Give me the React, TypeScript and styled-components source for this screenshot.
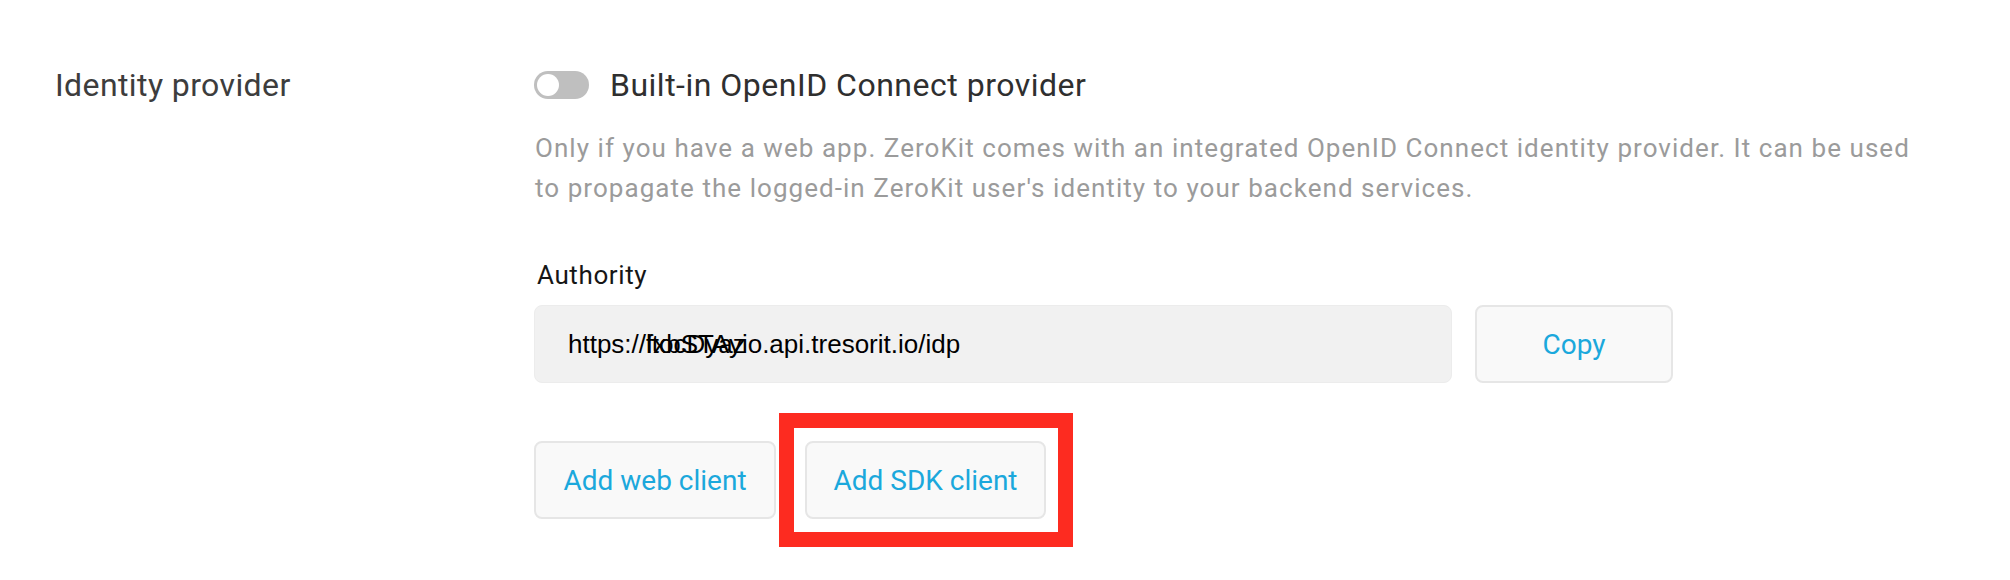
import styled, { createGlobalStyle } from "styled-components";

const GlobalStyle = createGlobalStyle`
  html, body {
    margin: 0;
    padding: 0;
    background: #ffffff;
  }

  body {
    font-family: Roboto, "Noto Sans", sans-serif;
  }
`;

const Page = styled.div`
  width: 2010px;
  height: 580px;
  box-sizing: border-box;
  padding: 65px 0 0 55px;
  display: grid;
  grid-template-columns: 479px 1420px;
  align-items: start;
`;

const SectionLabel = styled.div`
  font-size: 32px;
  line-height: 40px;
  letter-spacing: 0.4px;
  color: #3d3d3d;
`;

const Content = styled.div`
  display: flex;
  flex-direction: column;
`;

const ToggleRow = styled.div`
  display: flex;
  align-items: center;
  gap: 21px;
  height: 40px;
`;

const Toggle = styled.div<{ on?: boolean }>`
  width: 55px;
  height: 28px;
  border-radius: 14px;
  background: ${(p) => (p.on ? "#1ba8dc" : "#bfbfbf")};
  display: flex;
  align-items: center;
  justify-content: ${(p) => (p.on ? "flex-end" : "flex-start")};
  padding: 0 3px;
  box-sizing: border-box;
  flex-shrink: 0;

  &::before {
    content: "";
    width: 22px;
    height: 22px;
    border-radius: 50%;
    background: #ffffff;
  }
`;

const ToggleTitle = styled.div`
  font-size: 32px;
  line-height: 40px;
  letter-spacing: 0.5px;
  color: #2f2f2f;
`;

const Description = styled.p`
  margin: 23px 0 0 1px;
  font-size: 26px;
  line-height: 40px;
  letter-spacing: 1.05px;
  color: #9b9b9b;
  max-width: 1395px;
`;

const FieldLabel = styled.div`
  margin: 51px 0 0 3px;
  font-size: 26px;
  line-height: 32px;
  letter-spacing: 0.6px;
  color: #161616;
`;

const FieldRow = styled.div`
  margin-top: 14px;
  display: flex;
  gap: 23px;
`;

const ReadonlyInput = styled.div`
  width: 918px;
  height: 78px;
  box-sizing: border-box;
  padding: 0 33px;
  display: flex;
  align-items: center;
  background: #f1f1f1;
  border: 1px solid #ececec;
  border-radius: 8px;
  font-family: "Liberation Sans", Arial, sans-serif;
  font-size: 26px;
  color: #000000;
  white-space: nowrap;
`;

const Garbled = styled.span`
  display: inline-grid;

  & > span {
    grid-area: 1 / 1;
  }
`;

const Button = styled.button<{ w: number }>`
  width: ${(p) => p.w}px;
  height: 78px;
  padding: 0;
  box-sizing: border-box;
  background: #f9f9f9;
  border: 2px solid #e6e6e6;
  border-radius: 8px;
  font-family: Roboto, "Noto Sans", sans-serif;
  font-size: 28px;
  color: #1ba8dc;
  cursor: pointer;
`;

const ActionRow = styled.div`
  margin-top: 58px;
  display: flex;
  gap: 29px;
`;

const Highlight = styled.div`
  position: relative;
  display: flex;

  &::after {
    content: "";
    position: absolute;
    top: -28px;
    bottom: -28px;
    left: -26px;
    right: -27px;
    border: 15px solid #fd2b20;
    pointer-events: none;
  }
`;

export default function App() {
  return (
    <>
      <GlobalStyle />
      <Page>
        <SectionLabel>Identity provider</SectionLabel>
        <Content>
          <ToggleRow>
            <Toggle />
            <ToggleTitle>Built-in OpenID Connect provider</ToggleTitle>
          </ToggleRow>
          <Description>
            Only if you have a web app. ZeroKit comes with an integrated OpenID
            Connect identity provider. It can be used to propagate the
            logged-in ZeroKit user's identity to your backend services.
          </Description>
          <FieldLabel>Authority</FieldLabel>
          <FieldRow>
            <ReadonlyInput>
              https://
              <Garbled>
                <span>fxbSTAyio</span>
                <span>ltocDyaz</span>
              </Garbled>
              .api.tresorit.io/idp
            </ReadonlyInput>
            <Button w={198}>Copy</Button>
          </FieldRow>
          <ActionRow>
            <Button w={242}>Add web client</Button>
            <Highlight>
              <Button w={241}>Add SDK client</Button>
            </Highlight>
          </ActionRow>
        </Content>
      </Page>
    </>
  );
}
